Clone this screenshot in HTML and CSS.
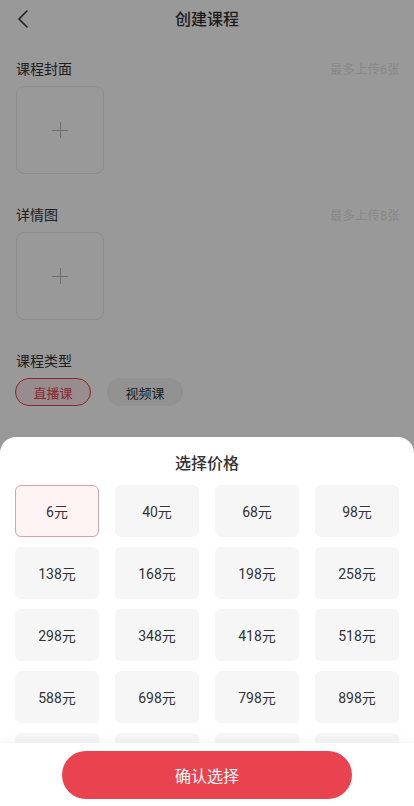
FILE: index.html
```html
<!DOCTYPE html>
<html lang="zh-CN">
<head>
    <meta charset="UTF-8">
    <meta name="viewport" content="width=device-width, initial-scale=1.0">
    <title>创建课程</title>
    <link rel="stylesheet" href="styles.css">
</head>
<body>

<header class="topbar">
    <span class="back">
        <svg width="12" height="20" viewBox="0 0 12 20"><path d="M10 2 L2 10 L10 18" fill="none" stroke="#333" stroke-width="1.6" stroke-linecap="round" stroke-linejoin="round"/></svg>
    </span>
    <h1>创建课程</h1>
</header>

<main class="form">
    <section class="field">
        <div class="field-head">
            <span class="label">课程封面</span>
            <span class="hint">最多上传6张</span>
        </div>
        <div class="upload"><span class="plus"></span></div>
    </section>

    <section class="field">
        <div class="field-head">
            <span class="label">详情图</span>
            <span class="hint">最多上传8张</span>
        </div>
        <div class="upload"><span class="plus"></span></div>
    </section>

    <section class="field">
        <div class="field-head">
            <span class="label">课程类型</span>
        </div>
        <div class="types">
            <span class="type active">直播课</span>
            <span class="type">视频课</span>
        </div>
    </section>
</main>

<!-- price picker -->
<div class="mask">
    <div class="sheet">
        <h2>选择价格</h2>
        <div class="prices">
            <ul>
                <li class="selected">6元</li>
                <li>40元</li>
                <li>68元</li>
                <li>98元</li>
                <li>138元</li>
                <li>168元</li>
                <li>198元</li>
                <li>258元</li>
                <li>298元</li>
                <li>348元</li>
                <li>418元</li>
                <li>518元</li>
                <li>588元</li>
                <li>698元</li>
                <li>798元</li>
                <li>898元</li>
                <li></li>
                <li></li>
                <li></li>
                <li></li>
            </ul>
        </div>
        <div class="sheet-foot">
            <button>确认选择</button>
        </div>
    </div>
</div>

</body>
</html>
```

FILE: styles.css
```css
body {
    font-family: "Noto Sans CJK SC", "Noto Sans", sans-serif;
    background-color: #ffffff;
    color: #333;
    margin: 0;
    padding: 0;
    width: 414px;
    height: 806px;
    overflow: hidden;
}

.topbar {
    height: 36px;
    display: flex;
    align-items: center;
    justify-content: center;
    position: relative;
}

.topbar h1 {
    margin: 0;
    font-size: 16px;
    font-weight: 500;
    color: #333;
}

.back {
    position: absolute;
    left: 17px;
    top: 9px;
    display: flex;
}

.form {
    padding: 22px 14px 0 16px;
}

.field {
    margin-bottom: 30px;
}

.field-head {
    height: 20px;
    display: flex;
    justify-content: space-between;
    align-items: center;
    margin-bottom: 8px;
}

.label {
    font-size: 14px;
    color: #333;
}

.hint {
    font-family: Roboto, "Noto Sans CJK SC", sans-serif;
    font-size: 12px;
    color: #e4e4e4;
    letter-spacing: 0.5px;
}

.upload {
    width: 86px;
    height: 86px;
    border: 1px solid #ececec;
    border-radius: 8px;
    display: flex;
    align-items: center;
    justify-content: center;
}

.plus {
    width: 16px;
    height: 16px;
    position: relative;
}

.plus::before,
.plus::after {
    content: "";
    position: absolute;
    background-color: #b8b8b8;
}

.plus::before {
    left: 0;
    top: 7.5px;
    width: 16px;
    height: 1px;
}

.plus::after {
    top: 0;
    left: 7.5px;
    width: 1px;
    height: 16px;
}

.types {
    display: flex;
    gap: 16px;
    margin-left: -1px;
}

.type {
    width: 76px;
    height: 28px;
    border-radius: 14px;
    box-sizing: border-box;
    display: flex;
    align-items: center;
    justify-content: center;
    font-size: 13px;
    background-color: #f3f3f3;
    color: #333;
}

.type.active {
    background-color: #fdeced;
    border: 1px solid #e8434f;
    color: #e8434f;
}

/* bottom sheet */
.mask {
    position: fixed;
    left: 0;
    top: 0;
    width: 100%;
    height: 100%;
    background-color: rgba(0, 0, 0, 0.4);
}

.sheet {
    position: absolute;
    left: 0;
    bottom: 0;
    width: 100%;
    height: 369px;
    background-color: #fff;
    border-radius: 16px 16px 0 0;
    display: flex;
    flex-direction: column;
}

.sheet h2 {
    margin: 14px 0 12px;
    font-size: 16px;
    line-height: 22px;
    font-weight: 500;
    text-align: center;
    color: #333;
}

.prices {
    flex: 1;
    overflow: hidden;
    padding: 0 15px;
}

.prices ul {
    list-style: none;
    margin: 0;
    padding: 0;
    display: grid;
    grid-template-columns: repeat(4, 1fr);
    column-gap: 16px;
    row-gap: 10px;
}

.prices li {
    height: 52px;
    box-sizing: border-box;
    border-radius: 6px;
    background-color: #f6f6f6;
    display: flex;
    align-items: center;
    justify-content: center;
    font-family: Roboto, "Noto Sans CJK SC", sans-serif;
    font-size: 14px;
    color: #333;
}

.prices li.selected {
    background-color: #fff4f4;
    border: 1px solid #d9a2a6;
}

.sheet-foot {
    height: 63px;
    display: flex;
    justify-content: center;
    padding-top: 8px;
    box-sizing: border-box;
    background-color: #fff;
    box-shadow: 0 -4px 8px rgba(0, 0, 0, 0.03);
}

button {
    width: 290px;
    height: 48px;
    border: none;
    border-radius: 24px;
    background-color: #e8434f;
    color: #fff;
    font-family: inherit;
    font-size: 16px;
}
```
